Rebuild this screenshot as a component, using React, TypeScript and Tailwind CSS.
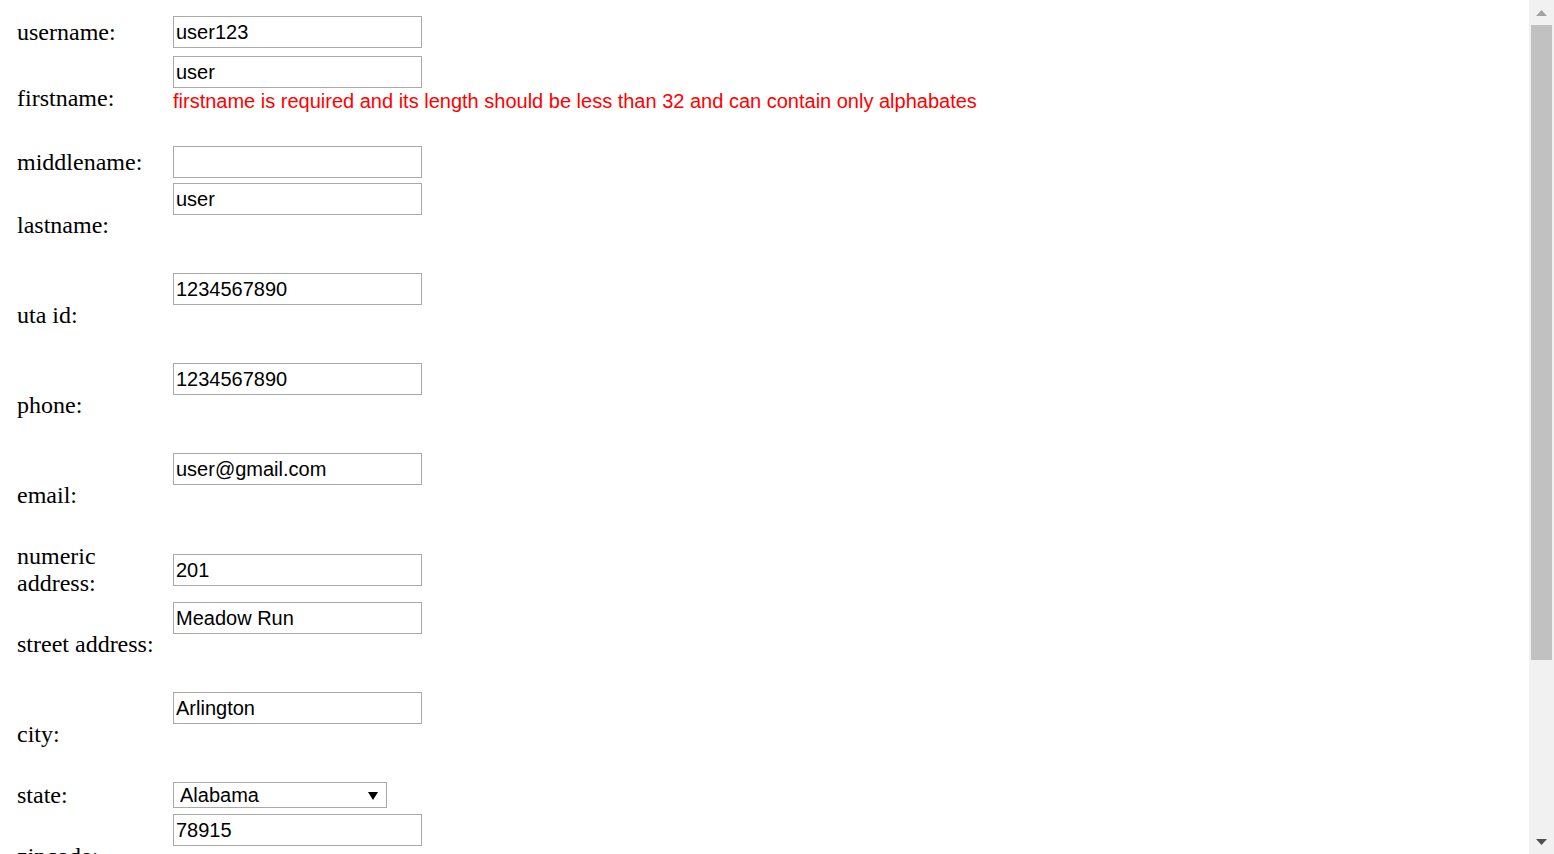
import React from "react";

const inputCls =
  "block w-[249px] h-[32px] border border-[#a9a9a9] bg-white px-[2px] text-[20px] text-black font-['Liberation_Sans',Arial,sans-serif] outline-none";
const labelCls =
  "w-[150px] shrink-0 text-[24px] leading-[normal] text-black font-['Liberation_Serif','Times_New_Roman',serif]";

function Field({
  label,
  value,
  extra,
  error,
}: {
  label: string;
  value: string;
  extra?: boolean;
  error?: string;
}) {
  return (
    <div className="flex items-center gap-[6px]">
      <div className={labelCls}>{label}</div>
      <div className="flex flex-col pt-[1px] pb-[1px]">
        <input className={inputCls} defaultValue={value} />
        {extra && (
          <div className="h-[53px] pt-[2px]">
            <div className="text-[20px] leading-[23px] whitespace-nowrap text-[#ff0000] font-['Liberation_Sans',Arial,sans-serif]">
              {error ?? "\u00a0"}
            </div>
          </div>
        )}
      </div>
    </div>
  );
}

function Scrollbar() {
  return (
    <div className="w-[25px] shrink-0 bg-[#f1f1f1] flex flex-col items-center">
      <div className="h-[25px] w-full flex items-center justify-center">
        <svg width="11" height="6" viewBox="0 0 11 6">
          <polygon points="5.5,0 11,6 0,6" fill="#a3a3a3" />
        </svg>
      </div>
      <div className="h-[635px] w-[21px] bg-[#c1c1c1]" />
      <div className="flex-1" />
      <div className="h-[25px] w-full flex items-center justify-center">
        <svg width="11" height="6" viewBox="0 0 11 6">
          <polygon points="0,0 11,0 5.5,6" fill="#505050" />
        </svg>
      </div>
    </div>
  );
}

export default function App() {
  return (
    <div className="flex h-screen overflow-hidden bg-white">
      <main className="flex-1 min-w-0 pl-[17px] pt-[15px] flex flex-col gap-[3px]">
        {/* username */}
        <div className="flex items-center gap-[6px] mb-[2px]">
          <div className={labelCls}>username:</div>
          <div className="flex flex-col pt-[1px] pb-[2px]">
            <input className={inputCls} defaultValue="user123" />
          </div>
        </div>
        <Field
          label="firstname:"
          value="user"
          extra
          error="firstname is required and its length should be less than 32 and can contain only alphabates"
        />
        <Field label="middlename:" value="" />
        <Field label="lastname:" value="user" extra />
        <Field label="uta id:" value="1234567890" extra />
        <Field label="phone:" value="1234567890" extra />
        <Field label="email:" value="user@gmail.com" extra />
        {/* numeric address */}
        <div className="flex items-center gap-[6px]">
          <div className={labelCls}>numeric address:</div>
          <div className="flex flex-col pt-[12px] pb-[12px]">
            <input className={inputCls} defaultValue="201" />
          </div>
        </div>
        <Field label="street address:" value="Meadow Run" extra />
        <Field label="city:" value="Arlington" extra />
        {/* state */}
        <div className="flex items-center gap-[6px]">
          <div className={labelCls}>state:</div>
          <div className="flex flex-col pt-[1px] pb-[2px]">
            <div className="relative w-[214px] h-[26px]">
              <select
                defaultValue="Alabama"
                className="appearance-none block w-full h-full border border-[#a9a9a9] bg-white pl-[6px] text-[20px] leading-[24px] text-black font-['Liberation_Sans',Arial,sans-serif] outline-none"
              >
                <option>Alabama</option>
                <option>Alaska</option>
                <option>Arizona</option>
                <option>Texas</option>
              </select>
              <svg
                className="absolute right-[9px] top-[10px] pointer-events-none"
                width="10"
                height="8"
                viewBox="0 0 10 8"
              >
                <polygon points="0,0 10,0 5,8" fill="#000" />
              </svg>
            </div>
          </div>
        </div>
        <Field label="zipcode:" value="78915" extra />
      </main>
      <Scrollbar />
    </div>
  );
}
